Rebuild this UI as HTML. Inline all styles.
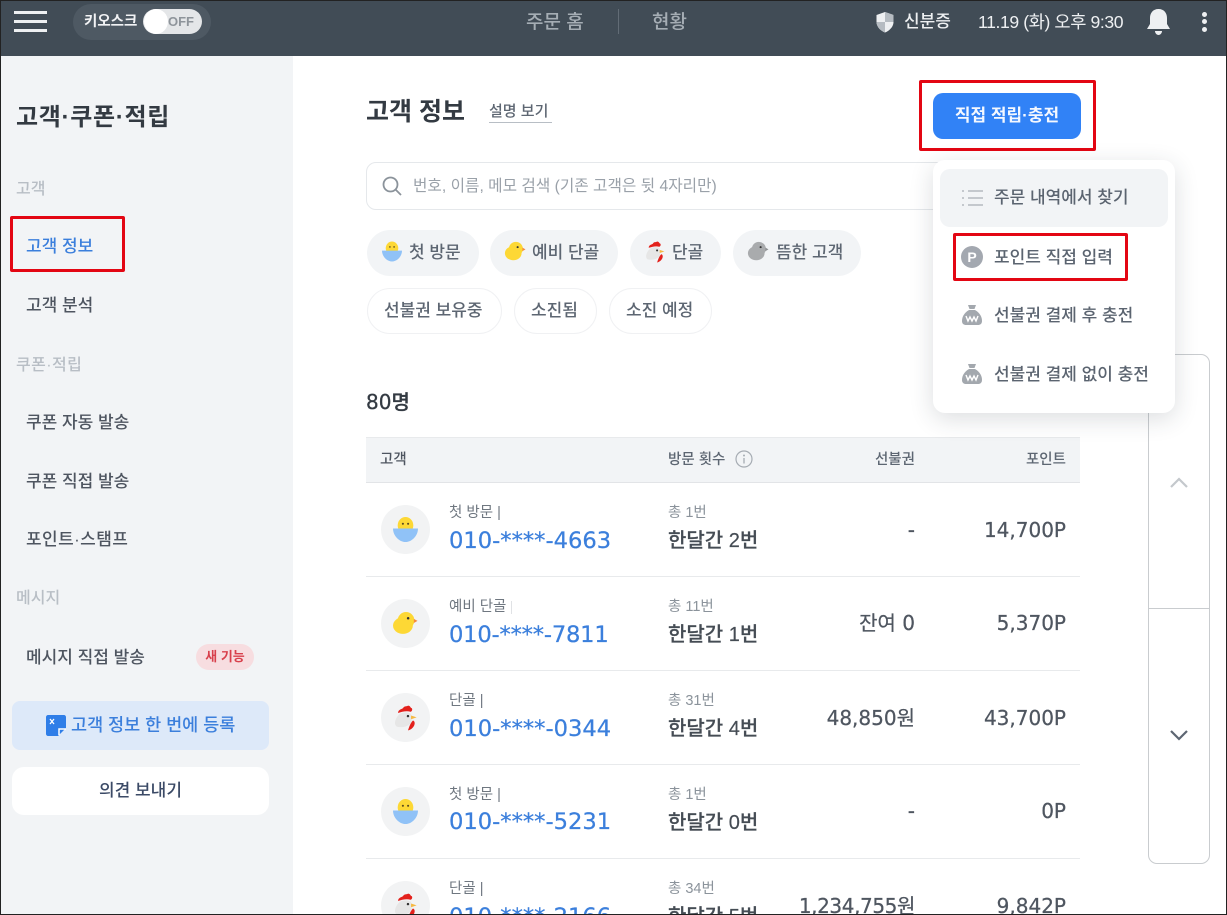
<!DOCTYPE html>
<html lang="ko"><head><meta charset="utf-8"><title>고객 정보</title>
<style>
*{box-sizing:border-box;margin:0;padding:0}
html,body{width:1227px;height:915px;overflow:hidden;background:#fff}
body{position:relative;font-family:"Liberation Sans","Noto Sans CJK KR",sans-serif;color:#4e5968}
.a{position:absolute}
.t{position:absolute;line-height:24px;height:24px;white-space:nowrap}
.r{text-align:right}
.c{text-align:center}
.red{position:absolute;border:3px solid #e30613;border-radius:2px}
.chip{position:absolute;height:46px;border-radius:23px;background:#f2f4f6}
.chipo{position:absolute;height:46px;border-radius:23px;background:#fff;border:1px solid #f0f1f3}
.line{position:absolute;left:366px;width:714px;height:1px;background:#e8eaec}
.av{position:absolute;left:381px;width:49px;height:49px;border-radius:50%;background:#f2f3f4}
.phone{font-family:"DejaVu Sans","Noto Sans CJK KR",sans-serif;font-size:22.6px;color:#3b7fdc;left:449px;-webkit-text-stroke:.25px #3b7fdc}
.sub{font-size:14.500px;color:#6f7780;left:449px}
.tot{font-size:14.500px;color:#8b939b;left:668px}
.mon{font-size:20px;color:#454c54;left:668px;font-weight:500;-webkit-text-stroke:.2px #454c54}
.num{font-family:"DejaVu Sans","Noto Sans CJK KR",sans-serif;font-size:20px;color:#4f5660;-webkit-text-stroke:.25px #4f5660}
.side{font-size:17px;color:#4e5560;left:26px;font-weight:500}
.sh{font-size:16px;color:#b8bec5;left:16px;font-weight:500}
.menu{font-size:17px;color:#5b6470;left:994px;font-weight:500}
.ct{font-size:17px;color:#5d6672;font-weight:500}
</style></head><body>
<svg width="0" height="0" style="position:absolute">
<defs>
<symbol id="egg" viewBox="0 0 24 24"><ellipse cx="12" cy="8" rx="7.500" ry="8" fill="#fdd835"/><circle cx="9.500" cy="6.500" r="1" fill="#5b4a1e"/><circle cx="14.500" cy="6.500" r="1" fill="#5b4a1e"/><path d="M0 11H24C24 18 18 24 12 24S0 18 0 11Z" fill="#90c2f7"/></symbol>
<symbol id="chick" viewBox="0 0 24 24"><circle cx="13" cy="9" r="8" fill="#fdd835"/><ellipse cx="10" cy="14" rx="9.500" ry="8" fill="#fdd835"/><circle cx="15" cy="7" r="1.200" fill="#333"/><path d="M20.500 7.500L24 9.500L20.500 11.500Z" fill="#f58a3c"/></symbol>
<symbol id="gray" viewBox="0 0 24 24"><circle cx="13" cy="9" r="8" fill="#a9abad"/><ellipse cx="10" cy="14" rx="9.500" ry="8" fill="#a9abad"/><circle cx="15" cy="7" r="1.200" fill="#333"/><path d="M20.500 7.500L24 9.500L20.500 11.500Z" fill="#8d8f91"/></symbol>
<symbol id="hen" viewBox="1 0.500 20 21"><path d="M5 7C5 4 8 4 9 3C10 1 12 2 13 1C15 1 15 3 16 3C17 4 16 6 15 6C12 5 8 6 5 7Z" fill="#e3211c"/><path d="M6 8C9 6 14 6 15.500 8L16 14C14 18 8 19 4 18C1 16 3 11 6 8Z" fill="#e6e6e6"/><circle cx="13" cy="9.500" r="1" fill="#333"/><path d="M15.500 9L20 10.500L15.500 12Z" fill="#f5b942"/><path d="M17 13C20 14 18 20 13 21C14 18 15 15 17 13Z" fill="#e3211c"/></symbol>
<symbol id="bag" viewBox="0 0 22 22"><path d="M7 1H15L13.500 5H8.500Z" fill="#a3a8ae"/><path d="M8 6H14C19 9 21 13 21 17C21 20 19 21 17 21H5C3 21 1 20 1 17C1 13 3 9 8 6Z" fill="#a3a8ae"/><path d="M5 12L7 17L9 13L11 17L13 13L15 17L17 12" fill="none" stroke="#fff" stroke-width="1.400"/></symbol>
</defs></svg>

<!-- header -->
<div class="a" style="left:0;top:0;width:1227px;height:56px;background:#414c56"></div>
<div class="a" style="left:14px;top:11px;width:33px;height:2.500px;background:#eef0f2"></div>
<div class="a" style="left:14px;top:20px;width:33px;height:2.500px;background:#eef0f2"></div>
<div class="a" style="left:14px;top:29px;width:33px;height:2.500px;background:#eef0f2"></div>
<div class="a" style="left:73px;top:4px;width:138px;height:36px;border-radius:18px;background:#4e5963"></div>
<div class="t" style="left:84px;top:10px;font-size:14.500px;font-weight:700;color:#f2f3f5">키오스크</div>
<div class="a" style="left:143px;top:9px;width:59px;height:25px;border-radius:13px;background:#e4e6e8"></div>
<div class="a" style="left:144px;top:9px;width:24px;height:25px;border-radius:50%;background:#fff"></div>
<div class="t" style="left:168px;top:10px;font-size:13px;font-weight:700;color:#8e949a">OFF</div>
<div class="t" style="left:526px;top:11px;font-size:19px;color:#a5adb4;font-weight:500">주문 홈</div>
<div class="a" style="left:618px;top:9px;width:1px;height:25px;background:#626c76"></div>
<div class="t" style="left:652px;top:11px;font-size:19px;color:#a5adb4;font-weight:500">현황</div>
<svg class="a" style="left:875px;top:11px" width="20" height="22" viewBox="0 0 20 22"><path d="M10 1L18.500 4V11C18.500 16 14 20 10 21.500C6 20 1.500 16 1.500 11V4Z" fill="#eef0f2"/><path d="M10 1V11H18.500V4Z" fill="#b6bcc2"/><path d="M10 11H1.500C1.700 16 6 20 10 21.500Z" fill="#b6bcc2"/></svg>
<div class="t" style="left:904px;top:10px;font-size:17px;color:#eef0f2;font-weight:500">신분증</div>
<div class="t" style="left:978px;top:10px;font-size:17.600px;color:#eef0f2;letter-spacing:-.4px">11.19 (화) 오후 9:30</div>
<svg class="a" style="left:1146px;top:8px" width="25" height="28" viewBox="0 0 25 28"><path d="M12.500 1C7 1 4 5 4 10V16L1 21H24L21 16V10C21 5 18 1 12.500 1Z" fill="#eef0f2"/><path d="M9 23H16C16 25 14.500 27 12.500 27S9 25 9 23Z" fill="#eef0f2"/></svg>
<div class="a" style="left:1202px;top:12px;width:5px;height:5px;border-radius:50%;background:#eef0f2"></div>
<div class="a" style="left:1202px;top:19px;width:5px;height:5px;border-radius:50%;background:#eef0f2"></div>
<div class="a" style="left:1202px;top:27px;width:5px;height:5px;border-radius:50%;background:#eef0f2"></div>

<!-- sidebar -->
<div class="a" style="left:0;top:56px;width:293px;height:859px;background:#f2f4f6"></div>
<div class="t" style="left:16px;top:106px;font-size:24px;letter-spacing:.7px;font-weight:700;color:#333a42">고객·쿠폰·적립</div>
<div class="t sh" style="top:178px">고객</div>
<div class="t side" style="top:235px;color:#3b7fdc">고객 정보</div>
<div class="red" style="left:10px;top:216px;width:115px;height:56px"></div>
<div class="t side" style="top:294px">고객 분석</div>
<div class="t sh" style="top:354px;letter-spacing:.4px">쿠폰·적립</div>
<div class="t side" style="top:411px">쿠폰 자동 발송</div>
<div class="t side" style="top:470px">쿠폰 직접 발송</div>
<div class="t side" style="top:528px;letter-spacing:.4px">포인트·스탬프</div>
<div class="t sh" style="top:587px">메시지</div>
<div class="t side" style="top:646px">메시지 직접 발송</div>
<div class="a" style="left:196px;top:644px;width:58px;height:26px;border-radius:13px;background:#f7dde0"></div>
<div class="t c" style="left:196px;top:645px;width:58px;font-size:13px;font-weight:700;color:#d8404c">새 기능</div>
<div class="a" style="left:12px;top:701px;width:257px;height:49px;border-radius:8px;background:#dde9f9"></div>
<svg class="a" style="left:46px;top:715px" width="20" height="21" viewBox="0 0 20 21"><path d="M2 0H18C19 0 20 1 20 2V13L12 21H2C1 21 0 20 0 19V2C0 1 1 0 2 0Z" fill="#2f7ee8"/><path d="M4 4L8 9M8 4L4 9" stroke="#fff" stroke-width="1.300"/><path d="M13 20V14H20" fill="none" stroke="#fff" stroke-width="1.500"/></svg>
<div class="t" style="left:71px;top:713px;font-size:17.500px;font-weight:500;color:#3b7fdc">고객 정보 한 번에 등록</div>
<div class="a" style="left:12px;top:767px;width:257px;height:48px;border-radius:12px;background:#fff"></div>
<div class="t c" style="left:12px;top:779px;width:257px;font-size:17px;font-weight:500;color:#3b4a66">의견 보내기</div>

<!-- main -->
<div class="t" style="left:366px;top:100px;font-size:25px;font-weight:700;color:#333a42">고객 정보</div>
<div class="t" style="left:489px;top:100px;font-size:15px;font-weight:500;color:#5d6672">설명 보기</div>
<div class="a" style="left:489px;top:122px;width:63px;height:1px;background:#b8bec5"></div>

<div class="a" style="left:366px;top:162px;width:600px;height:48px;border:1px solid #e5e8eb;border-radius:10px"></div>
<svg class="a" style="left:381px;top:175px" width="22" height="22" viewBox="0 0 22 22"><circle cx="9.500" cy="9.500" r="7" fill="none" stroke="#8b939b" stroke-width="1.800"/><path d="M14.500 14.500L20 20" stroke="#8b939b" stroke-width="1.800"/></svg>
<div class="t" style="left:413px;top:175px;font-size:15.700px;color:#9aa1a9">번호, 이름, 메모 검색 (기존 고객은 뒷 4자리만)</div>

<div class="chip" style="left:367px;top:230px;width:112px"></div>
<svg class="a" style="left:382px;top:241px" width="20" height="21"><use href="#egg"/></svg>
<div class="t ct" style="left:409px;top:241px">첫 방문</div>
<div class="chip" style="left:490px;top:230px;width:128px"></div>
<svg class="a" style="left:504px;top:241px" width="22" height="21"><use href="#chick"/></svg>
<div class="t ct" style="left:532px;top:241px">예비 단골</div>
<div class="chip" style="left:630px;top:230px;width:91px"></div>
<svg class="a" style="left:644px;top:241px" width="22" height="22"><use href="#hen"/></svg>
<div class="t ct" style="left:672px;top:241px">단골</div>
<div class="chip" style="left:733px;top:230px;width:128px"></div>
<svg class="a" style="left:747px;top:241px" width="22" height="21"><use href="#gray"/></svg>
<div class="t ct" style="left:776px;top:241px">뜸한 고객</div>

<div class="chipo" style="left:367px;top:288px;width:135px"></div>
<div class="t ct" style="left:384px;top:299px">선불권 보유중</div>
<div class="chipo" style="left:514px;top:288px;width:83px"></div>
<div class="t ct" style="left:531px;top:299px">소진됨</div>
<div class="chipo" style="left:609px;top:288px;width:103px"></div>
<div class="t ct" style="left:626px;top:299px">소진 예정</div>

<div class="t" style="left:366px;top:390px;font-family:'DejaVu Sans','Noto Sans CJK KR',sans-serif;font-size:20px;font-weight:500;color:#333a42;-webkit-text-stroke:.3px #333a42">80명</div>

<!-- table -->
<div class="a" style="left:366px;top:437px;width:714px;height:46px;background:#f2f4f6;border-top:1px solid #e8eaec;border-bottom:1px solid #e2e4e7"></div>
<div class="t" style="left:380px;top:448px;font-size:14.500px;font-weight:500;color:#4e5560">고객</div>
<div class="t" style="left:668px;top:448px;font-size:14.500px;font-weight:500;color:#5d6672">방문 횟수</div>
<svg class="a" style="left:735px;top:450px" width="18" height="18" viewBox="0 0 18 18"><circle cx="9" cy="9" r="8" fill="none" stroke="#a6acb3" stroke-width="1.200"/><path d="M9 8V13.500" stroke="#a6acb3" stroke-width="1.300"/><circle cx="9" cy="5.500" r="1" fill="#a6acb3"/></svg>
<div class="t r" style="left:780px;top:448px;width:135px;font-size:14.500px;font-weight:500;color:#5d6672">선불권</div>
<div class="t r" style="left:960px;top:448px;width:106px;font-size:14.500px;font-weight:500;color:#5d6672">포인트</div>

<!-- row 1 -->
<div class="av" style="top:505px"></div>
<svg class="a" style="left:393px;top:517px" width="25" height="25"><use href="#egg"/></svg>
<div class="t sub" style="top:501px">첫 방문 |</div>
<div class="t phone" style="top:529px">010-****-4663</div>
<div class="t tot" style="top:501px">총 1번</div>
<div class="t mon" style="top:529px">한달간 2번</div>
<div class="t num r" style="left:780px;top:518px;width:135px">-</div>
<div class="t num r" style="left:960px;top:518px;width:106px">14,700P</div>
<div class="line" style="top:576px"></div>

<!-- row 2 -->
<div class="av" style="top:599px"></div>
<svg class="a" style="left:392px;top:611px" width="26" height="25"><use href="#chick"/></svg>
<div class="t sub" style="top:595px">예비 단골</div>
<div class="a" style="left:511px;top:601px;width:1px;height:13px;background:#e0e2e5"></div>
<div class="t phone" style="top:623px;letter-spacing:-.2px">010-****-7811</div>
<div class="t tot" style="top:595px">총 11번</div>
<div class="t mon" style="top:623px">한달간 1번</div>
<div class="t num r" style="left:780px;top:611px;width:135px">잔여 0</div>
<div class="t num r" style="left:960px;top:611px;width:106px">5,370P</div>
<div class="line" style="top:670px"></div>

<!-- row 3 -->
<div class="av" style="top:693px"></div>
<svg class="a" style="left:393px;top:705px" width="25" height="26"><use href="#hen"/></svg>
<div class="t sub" style="top:689px">단골 |</div>
<div class="t phone" style="top:717px">010-****-0344</div>
<div class="t tot" style="top:689px">총 31번</div>
<div class="t mon" style="top:717px">한달간 4번</div>
<div class="t num r" style="left:780px;top:706px;width:135px">48,850원</div>
<div class="t num r" style="left:960px;top:706px;width:106px">43,700P</div>
<div class="line" style="top:764px"></div>

<!-- row 4 -->
<div class="av" style="top:787px"></div>
<svg class="a" style="left:393px;top:799px" width="25" height="25"><use href="#egg"/></svg>
<div class="t sub" style="top:783px">첫 방문 |</div>
<div class="t phone" style="top:810px">010-****-5231</div>
<div class="t tot" style="top:783px">총 1번</div>
<div class="t mon" style="top:811px">한달간 0번</div>
<div class="t num r" style="left:780px;top:799px;width:135px">-</div>
<div class="t num r" style="left:960px;top:799px;width:106px">0P</div>
<div class="line" style="top:858px"></div>

<!-- row 5 -->
<div class="av" style="top:881px"></div>
<svg class="a" style="left:393px;top:893px" width="25" height="26"><use href="#hen"/></svg>
<div class="t sub" style="top:877px">단골 |</div>
<div class="t phone" style="top:905px">010-****-2166</div>
<div class="t tot" style="top:877px">총 34번</div>
<div class="t mon" style="top:905px">한달간 5번</div>
<div class="t num r" style="left:780px;top:894px;width:135px;letter-spacing:-.4px">1,234,755원</div>
<div class="t num r" style="left:960px;top:894px;width:106px">9,842P</div>

<!-- scroll panel -->
<div class="a" style="left:1148px;top:354px;width:62px;height:510px;border:1px solid #c9cccf;border-radius:9px;background:#fff"></div>
<div class="a" style="left:1148px;top:608px;width:62px;height:1px;background:#c9cccf"></div>
<svg class="a" style="left:1168px;top:475px" width="22" height="14" viewBox="0 0 22 14"><path d="M3 12L11 4L19 12" fill="none" stroke="#c4c8cc" stroke-width="2.200"/></svg>
<svg class="a" style="left:1168px;top:729px" width="22" height="14" viewBox="0 0 22 14"><path d="M3 2L11 10L19 2" fill="none" stroke="#5d6672" stroke-width="2.200"/></svg>

<!-- top button -->
<div class="red" style="left:919px;top:80px;width:177px;height:71px"></div>
<div class="a" style="left:933px;top:93px;width:148px;height:46px;border-radius:10px;background:#3182f6"></div>
<div class="t c" style="left:933px;top:104px;width:148px;font-size:17px;font-weight:700;color:#f4f8ff">직접 적립·충전</div>

<!-- popup -->
<div class="a" style="left:933px;top:160px;width:242px;height:253px;border-radius:12px;background:#fff;box-shadow:0 6px 24px rgba(40,50,60,.16)"></div>
<div class="a" style="left:940px;top:169px;width:228px;height:58px;border-radius:10px;background:#f2f4f6"></div>
<svg class="a" style="left:961px;top:188px" width="22" height="20" viewBox="0 0 22 20"><g stroke="#b4b9bf" stroke-width="1.500"><path d="M7 3H22M7 10H22M7 17H22"/><path d="M1 3H3M1 10H3M1 17H3"/></g></svg>
<div class="t menu" style="top:186px">주문 내역에서 찾기</div>
<div class="a" style="left:961px;top:246px;width:22px;height:22px;border-radius:50%;background:#a3a8b0"></div>
<div class="t c" style="left:961px;top:245px;width:22px;font-size:14px;font-weight:700;color:#fff">P</div>
<div class="t menu" style="top:246px">포인트 직접 입력</div>
<div class="red" style="left:953px;top:233px;width:175px;height:48px"></div>
<svg class="a" style="left:961px;top:304px" width="22" height="22"><use href="#bag"/></svg>
<div class="t menu" style="top:304px">선불권 결제 후 충전</div>
<svg class="a" style="left:961px;top:363px" width="22" height="22"><use href="#bag"/></svg>
<div class="t menu" style="top:363px">선불권 결제 없이 충전</div>

<!-- outer frame -->
<div class="a" style="left:0;top:0;width:1227px;height:915px;border:1px solid #222;pointer-events:none"></div>
</body></html>
